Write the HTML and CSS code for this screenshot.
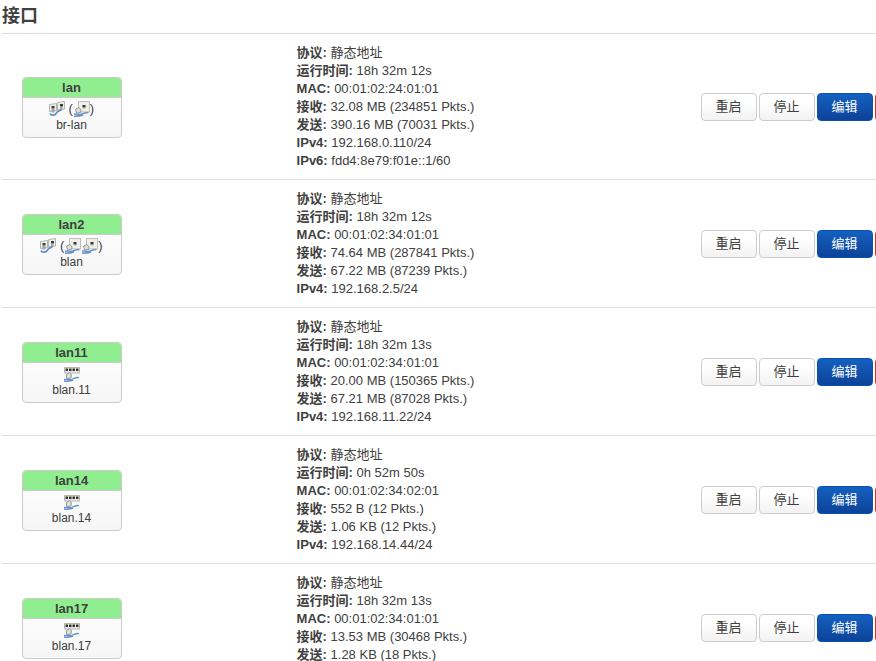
FILE: index.html
```html
<!DOCTYPE html>
<html lang="zh-CN">
<head>
<meta charset="utf-8">
<title>接口</title>
<link rel="stylesheet" href="styles.css">
</head>
<body>
<svg class="defs" width="0" height="0">
  <symbol id="bridge" viewBox="0 0 16 16">
    <path d="M.5 3.500 7.500 2.500V9.500L.5 10.500z" fill="#efefec" stroke="#b4b4b0"/>
    <path d="M8.500 1.500l7-1v7.500l-7 1z" fill="#efefec" stroke="#b4b4b0"/>
    <path d="M2.500 5h3v2.500h-3zM11 3h3v2.500h-3z" fill="#3c3c30"/>
    <path d="M2.500 8h3v3.500h-3zM11 6h2.500v3H11z" fill="#a5a5a5"/>
    <path d="M1 12.500c1 2.500 5.500 2 6.500-.5S10 10 12.500 9" fill="none" stroke="#5f8fc4" stroke-width="1.800"/>
  </symbol>
  <symbol id="port" viewBox="0 0 16 16">
    <path d="M4.500.5h11v10.500h-11z" fill="#efefec" stroke="#bdbdb9"/>
    <path d="M8.500 4h3v2.500h-3z" fill="#35352a"/>
    <path d="M8.500 6.500h3v1h-3z" fill="#a8a880"/>
    <path d="M1.500 8 5 6.500l2 2.500-.5 2.500-4 .5z" fill="#dededb" stroke="#999"/>
    <path d="M0 13.300c4-1 5 .8 8-.3s4-1.500 6.500-1.500M0 15.200c4 0 6 0 9-1.200" fill="none" stroke="#6595c8" stroke-width="1.400"/>
  </symbol>
  <symbol id="vlan" viewBox="0 0 16 16">
    <path d="M.5 1.500h15V7H.5z" fill="#e9e9e5" stroke="#b4b4b0"/>
    <path d="M1.500 2.500h2.500V5H1.500zM5 2.500h2.500V5H5zM8.500 2.500H11V5H8.500zM12 2.500h2.500V5H12z" fill="#34342a"/>
    <path d="M2 9 5.500 6.500 7.500 9l-.5 3-4 .5z" fill="#dededb" stroke="#999"/>
    <path d="M0 13.600c4-1 5 .8 8-.3s4-2.200 7-1.700M0 15.200c4 .2 6 0 9-1.200" fill="none" stroke="#6595c8" stroke-width="1.400"/>
  </symbol>
</svg>
<h3>接口</h3>
<div class="table">
  <section class="row">
    <div class="cell-badge"><div class="badge"><div class="head">lan</div><div class="body"><div class="icons"><svg><use href="#bridge"/></svg> (<svg><use href="#port"/></svg>)</div><div>br-lan</div></div></div></div>
    <div class="info"><p><b>协议:</b> 静态地址</p><p><b>运行时间:</b> 18h 32m 12s</p><p><b>MAC:</b> 00:01:02:24:01:01</p><p><b>接收:</b> 32.08 MB (234851 Pkts.)</p><p><b>发送:</b> 390.16 MB (70031 Pkts.)</p><p><b>IPv4:</b> 192.168.0.110/24</p><p><b>IPv6:</b> fdd4:8e79:f01e::1/60</p></div>
    <div class="actions"><button>重启</button><button>停止</button><button class="edit">编辑</button><button class="remove"></button></div>
  </section>
  <section class="row">
    <div class="cell-badge"><div class="badge"><div class="head">lan2</div><div class="body"><div class="icons"><svg><use href="#bridge"/></svg> (<svg><use href="#port"/></svg><svg><use href="#port"/></svg>)</div><div>blan</div></div></div></div>
    <div class="info"><p><b>协议:</b> 静态地址</p><p><b>运行时间:</b> 18h 32m 12s</p><p><b>MAC:</b> 00:01:02:34:01:01</p><p><b>接收:</b> 74.64 MB (287841 Pkts.)</p><p><b>发送:</b> 67.22 MB (87239 Pkts.)</p><p><b>IPv4:</b> 192.168.2.5/24</p></div>
    <div class="actions"><button>重启</button><button>停止</button><button class="edit">编辑</button><button class="remove"></button></div>
  </section>
  <section class="row">
    <div class="cell-badge"><div class="badge"><div class="head">lan11</div><div class="body"><div class="icons"><svg><use href="#vlan"/></svg></div><div>blan.11</div></div></div></div>
    <div class="info"><p><b>协议:</b> 静态地址</p><p><b>运行时间:</b> 18h 32m 13s</p><p><b>MAC:</b> 00:01:02:34:01:01</p><p><b>接收:</b> 20.00 MB (150365 Pkts.)</p><p><b>发送:</b> 67.21 MB (87028 Pkts.)</p><p><b>IPv4:</b> 192.168.11.22/24</p></div>
    <div class="actions"><button>重启</button><button>停止</button><button class="edit">编辑</button><button class="remove"></button></div>
  </section>
  <section class="row">
    <div class="cell-badge"><div class="badge"><div class="head">lan14</div><div class="body"><div class="icons"><svg><use href="#vlan"/></svg></div><div>blan.14</div></div></div></div>
    <div class="info"><p><b>协议:</b> 静态地址</p><p><b>运行时间:</b> 0h 52m 50s</p><p><b>MAC:</b> 00:01:02:34:02:01</p><p><b>接收:</b> 552 B (12 Pkts.)</p><p><b>发送:</b> 1.06 KB (12 Pkts.)</p><p><b>IPv4:</b> 192.168.14.44/24</p></div>
    <div class="actions"><button>重启</button><button>停止</button><button class="edit">编辑</button><button class="remove"></button></div>
  </section>
  <section class="row last">
    <div class="cell-badge"><div class="badge"><div class="head">lan17</div><div class="body"><div class="icons"><svg><use href="#vlan"/></svg></div><div>blan.17</div></div></div></div>
    <div class="info"><p><b>协议:</b> 静态地址</p><p><b>运行时间:</b> 18h 32m 13s</p><p><b>MAC:</b> 00:01:02:34:01:01</p><p><b>接收:</b> 13.53 MB (30468 Pkts.)</p><p><b>发送:</b> 1.28 KB (18 Pkts.)</p></div>
    <div class="actions"><button>重启</button><button>停止</button><button class="edit">编辑</button><button class="remove"></button></div>
  </section>
</div>
</body>
</html>
```
FILE: styles.css
```css
* { box-sizing: border-box; }
html, body { height: 661px; overflow: hidden; }
body {
  margin: 0;
  padding-left: 2px;
  background: #fff;
  color: #404040;
  font: 13px/18px "Liberation Sans", "Noto Sans CJK SC", sans-serif;
}
.defs { display: block; height: 0; }
h3 { margin: 0; height: 33px; font-size: 18px; line-height: 32px; }
p { margin: 0; height: 18px; white-space: nowrap; }
.row {
  display: grid;
  grid-template-columns: 294px 405px 175px;
  align-items: center;
  border-top: 1px solid #ddd;
  padding: 10px 0 9px;
}
.info { padding-left: .6px; }
.last .cell-badge, .last .actions { margin-bottom: -18px; }
.cell-badge { padding-left: 20px; }
.badge {
  width: 100px;
  height: 61px;
  border: 1px solid #ccc;
  border-radius: 4px;
  overflow: hidden;
  text-align: center;
  background: linear-gradient(#fff, #f6f6f6);
}
.head {
  height: 20px;
  line-height: 20px;
  background: #90ee90;
  border-bottom: 1px solid #ccc;
  font-weight: bold;
  padding-right: 1px;
}
.body { padding: 2px 1px 0 0; line-height: 16px; font-size: 12px; }
.icons { display: flex; justify-content: center; height: 17px; line-height: 17px; font-size: 13px; white-space: pre; }
.icons svg { width: 16px; height: 16px; margin-top: 1px; flex: none; }
.icons svg + svg { margin-left: 1px; }
.actions { display: flex; gap: 2px; overflow: hidden; }
button {
  flex: none;
  width: 56px;
  height: 28px;
  padding: 0 1px 1px 0;
  border: 1px solid #ccc;
  border-radius: 4px;
  background: linear-gradient(#fff 30%, #f2f2f2);
  color: #404040;
  font: 13px/18px "Liberation Sans", "Noto Sans CJK SC", sans-serif;
}
.edit { color: #fff; border-color: #0b50b4; background: linear-gradient(#1461c0, #0c4299); }
.remove { border-color: #d73922; background: #d73922; }
```
